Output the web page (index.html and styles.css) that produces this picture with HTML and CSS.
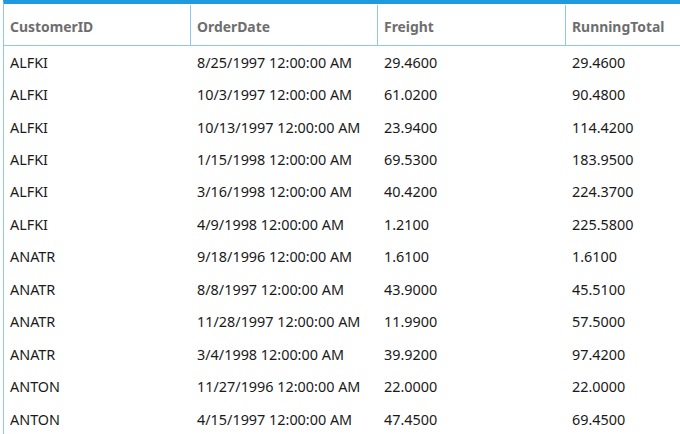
FILE: index.html
```html
<!DOCTYPE html>
<html>
<head>
<meta charset="utf-8">
<link rel="stylesheet" href="styles.css">
</head>
<body>
<div class="grid">
  <div class="head">
    <div class="hc c1">CustomerID</div>
    <div class="hc c2">OrderDate</div>
    <div class="hc c3">Freight</div>
    <div class="hc c4">RunningTotal</div>
  </div>
  <div class="row"><div class="c c1">ALFKI</div><div class="c c2">8/25/1997 12:00:00 AM</div><div class="c c3">29.4600</div><div class="c c4">29.4600</div></div>
  <div class="row"><div class="c c1">ALFKI</div><div class="c c2">10/3/1997 12:00:00 AM</div><div class="c c3">61.0200</div><div class="c c4">90.4800</div></div>
  <div class="row"><div class="c c1">ALFKI</div><div class="c c2">10/13/1997 12:00:00 AM</div><div class="c c3">23.9400</div><div class="c c4">114.4200</div></div>
  <div class="row"><div class="c c1">ALFKI</div><div class="c c2">1/15/1998 12:00:00 AM</div><div class="c c3">69.5300</div><div class="c c4">183.9500</div></div>
  <div class="row"><div class="c c1">ALFKI</div><div class="c c2">3/16/1998 12:00:00 AM</div><div class="c c3">40.4200</div><div class="c c4">224.3700</div></div>
  <div class="row"><div class="c c1">ALFKI</div><div class="c c2">4/9/1998 12:00:00 AM</div><div class="c c3">1.2100</div><div class="c c4">225.5800</div></div>
  <div class="row"><div class="c c1">ANATR</div><div class="c c2">9/18/1996 12:00:00 AM</div><div class="c c3">1.6100</div><div class="c c4">1.6100</div></div>
  <div class="row"><div class="c c1">ANATR</div><div class="c c2">8/8/1997 12:00:00 AM</div><div class="c c3">43.9000</div><div class="c c4">45.5100</div></div>
  <div class="row"><div class="c c1">ANATR</div><div class="c c2">11/28/1997 12:00:00 AM</div><div class="c c3">11.9900</div><div class="c c4">57.5000</div></div>
  <div class="row"><div class="c c1">ANATR</div><div class="c c2">3/4/1998 12:00:00 AM</div><div class="c c3">39.9200</div><div class="c c4">97.4200</div></div>
  <div class="row"><div class="c c1">ANTON</div><div class="c c2">11/27/1996 12:00:00 AM</div><div class="c c3">22.0000</div><div class="c c4">22.0000</div></div>
  <div class="row"><div class="c c1">ANTON</div><div class="c c2">4/15/1997 12:00:00 AM</div><div class="c c3">47.4500</div><div class="c c4">69.4500</div></div>
</div>
</body>
</html>
```
FILE: styles.css
```css
html, body {
  margin: 0;
  padding: 0;
  background: #ffffff;
  overflow: hidden;
}
body {
  font-family: "Noto Sans", "Open Sans", sans-serif;
  font-size: 14.4px;
  color: #1a1a1a;
}
.grid {
  margin-left: 3px;
  border-top: 4px solid #1f9ade;
  border-left: 1px solid #8fc8ee;
  height: 430px;
}
.head {
  display: grid;
  grid-template-columns: 186px 187px 188px 1fr;
  height: 40px;
  border-bottom: 1px solid #8fc8ee;
  margin-top: 1px;
}
.hc {
  display: flex;
  align-items: center;
  padding-left: 6px;
  padding-top: 2px;
  font-size: 13.9px;
  font-weight: 700;
  color: #6e6e6e;
}
.head .c2, .head .c3, .head .c4 {
  border-left: 1px solid #8fc8ee;
}
.row {
  display: grid;
  grid-template-columns: 186px 187px 188px 1fr;
  height: 32.45px;
  align-items: center;
}
.c {
  padding-left: 6px;
  white-space: nowrap;
}
.row .c2, .row .c3, .row .c4 {
  padding-left: 7px;
}
```
